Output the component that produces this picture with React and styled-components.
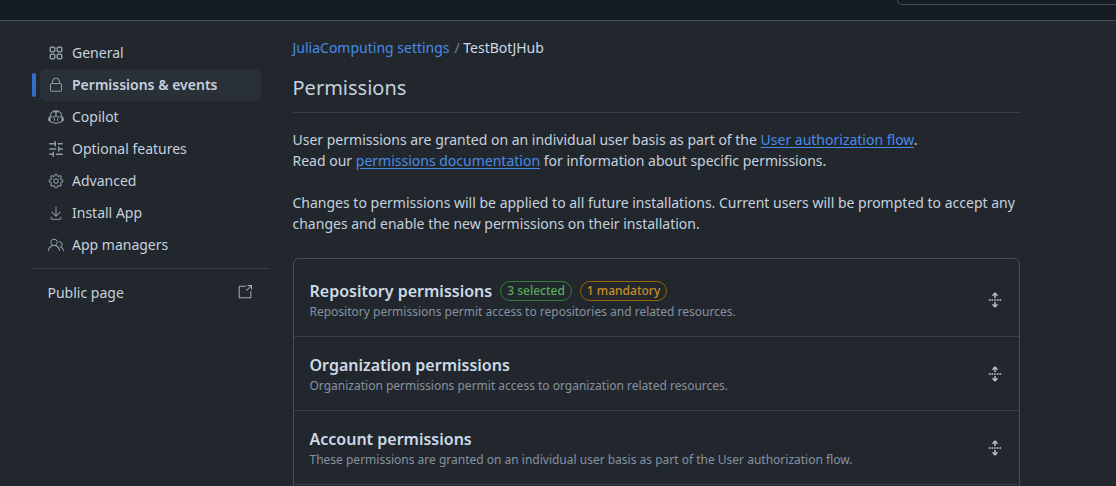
import React from 'react';
import styled, { createGlobalStyle } from 'styled-components';
import { GoLock, GoCopilot, GoGear, GoDownload, GoPeople, GoLinkExternal, GoUnfold } from 'react-icons/go';

const AppsIcon = ({ size }) => (
    <svg width={size} height={size} viewBox="0 0 16 16" fill="currentColor">
        <path d="M1.5 3.25c0-.966.784-1.75 1.75-1.75h2.5c.966 0 1.75.784 1.75 1.75v2.5A1.75 1.75 0 0 1 5.75 7.5h-2.5A1.75 1.75 0 0 1 1.5 5.75Zm7 0c0-.966.784-1.75 1.75-1.75h2.5c.966 0 1.75.784 1.75 1.75v2.5a1.75 1.75 0 0 1-1.75 1.75h-2.5A1.75 1.75 0 0 1 8.5 5.75Zm-7 7c0-.966.784-1.75 1.75-1.75h2.5c.966 0 1.75.784 1.75 1.75v2.5a1.75 1.75 0 0 1-1.75 1.75h-2.5a1.75 1.75 0 0 1-1.75-1.75Zm7 0c0-.966.784-1.75 1.75-1.75h2.5c.966 0 1.75.784 1.75 1.75v2.5a1.75 1.75 0 0 1-1.75 1.75h-2.5a1.75 1.75 0 0 1-1.75-1.75ZM3.25 3a.25.25 0 0 0-.25.25v2.5c0 .138.112.25.25.25h2.5A.25.25 0 0 0 6 5.75v-2.5A.25.25 0 0 0 5.75 3Zm7 0a.25.25 0 0 0-.25.25v2.5c0 .138.112.25.25.25h2.5a.25.25 0 0 0 .25-.25v-2.5a.25.25 0 0 0-.25-.25ZM3 10.25v2.5c0 .138.112.25.25.25h2.5a.25.25 0 0 0 .25-.25v-2.5a.25.25 0 0 0-.25-.25h-2.5a.25.25 0 0 0-.25.25Zm7.25-.25a.25.25 0 0 0-.25.25v2.5c0 .138.112.25.25.25h2.5a.25.25 0 0 0 .25-.25v-2.5a.25.25 0 0 0-.25-.25Z" />
    </svg>
);

const SlidersIcon = ({ size }) => (
    <svg width={size} height={size} viewBox="0 0 16 16" fill="currentColor">
        <path d="M15 2.75a.75.75 0 0 1-.75.75h-4a.75.75 0 0 1 0-1.5h4a.75.75 0 0 1 .75.75Zm-8.5.75v1.25a.75.75 0 0 0 1.5 0v-4a.75.75 0 0 0-1.5 0V2H1.75a.75.75 0 0 0 0 1.5H6.5Zm1.25 5.25a.75.75 0 0 0 0-1.5h-6a.75.75 0 0 0 0 1.5h6ZM15 8a.75.75 0 0 1-.75.75H11.5V10a.75.75 0 1 1-1.5 0V6a.75.75 0 0 1 1.5 0v1.25h2.75A.75.75 0 0 1 15 8Zm-9 5.25v-2a.75.75 0 0 0-1.5 0v1.25H1.75a.75.75 0 0 0 0 1.5H4.5v1.25a.75.75 0 0 0 1.5 0v-2Zm9 0a.75.75 0 0 1-.75.75h-6a.75.75 0 0 1 0-1.5h6a.75.75 0 0 1 .75.75Z" />
    </svg>
);

const navItems = [
    { label: 'General', icon: AppsIcon },
    { label: 'Permissions & events', icon: GoLock, active: true },
    { label: 'Copilot', icon: GoCopilot },
    { label: 'Optional features', icon: SlidersIcon },
    { label: 'Advanced', icon: GoGear },
    { label: 'Install App', icon: GoDownload },
    { label: 'App managers', icon: GoPeople },
];

const permissionRows = [
    {
        title: 'Repository permissions',
        text: 'Repository permissions permit access to repositories and related resources.',
        selected: '3 selected',
        mandatory: '1 mandatory',
    },
    {
        title: 'Organization permissions',
        text: 'Organization permissions permit access to organization related resources.',
    },
    {
        title: 'Account permissions',
        text: 'These permissions are granted on an individual user basis as part of the User authorization flow.',
    },
];

const App = () => {
    return (
        <Page>
            <GlobalStyle />
            <Header>
                <SearchBox />
            </Header>
            <Layout>
                <Sidebar>
                    <NavList>
                        {navItems.map(({ label, icon: Icon, active }) => (
                            <NavRow key={label}>
                                <Marker $active={active} />
                                <NavItem $active={active}>
                                    <Icon size={16} />
                                    <NavLabel>{label}</NavLabel>
                                </NavItem>
                            </NavRow>
                        ))}
                    </NavList>
                    <Divider />
                    <PublicLink>
                        Public page
                        <GoLinkExternal size={16} />
                    </PublicLink>
                </Sidebar>
                <Main>
                    <Breadcrumb>
                        <Link>JuliaComputing settings</Link>
                        <Slash>/</Slash>
                        <Current>TestBotJHub</Current>
                    </Breadcrumb>
                    <Heading>Permissions</Heading>
                    <Paragraph>
                        User permissions are granted on an individual user basis as part of the <Link $underline>User authorization flow</Link>.
                        <br />
                        Read our <Link $underline>permissions documentation</Link> for information about specific permissions.
                    </Paragraph>
                    <Paragraph>
                        Changes to permissions will be applied to all future installations. Current users will be prompted to accept any changes and enable the new permissions on their installation.
                    </Paragraph>
                    <Panel>
                        {permissionRows.map((row) => (
                            <PanelRow key={row.title}>
                                <RowBody>
                                    <RowTitle>
                                        {row.title}
                                        {row.selected && <Badge $color="#57ab5a" $border="#347d39">{row.selected}</Badge>}
                                        {row.mandatory && <Badge $color="#c69026" $border="#966600">{row.mandatory}</Badge>}
                                    </RowTitle>
                                    <RowText>{row.text}</RowText>
                                </RowBody>
                                <UnfoldButton>
                                    <GoUnfold size={16} />
                                </UnfoldButton>
                            </PanelRow>
                        ))}
                    </Panel>
                </Main>
            </Layout>
        </Page>
    );
};

const GlobalStyle = createGlobalStyle`
    html, body {
        margin: 0;
        height: 100%;
        overflow: hidden;
        background-color: #22272e;
    }

    * {
        box-sizing: border-box;
    }
`;

const Page = styled.div`
    width: 1116px;
    height: 486px;
    overflow: hidden;
    background-color: #22272e;
    color: #c5d1de;
    font-family: "Noto Sans", "Liberation Sans", sans-serif;
    font-size: 14px;
`;

const Header = styled.div`
    height: 21px;
    display: flex;
    justify-content: flex-end;
    align-items: flex-start;
    background-color: #161c23;
    border-bottom: 1px solid #444c56;
`;

const SearchBox = styled.div`
    width: 219px;
    height: 5px;
    border: 1px solid #444c56;
    border-top: none;
    border-right: none;
    border-bottom-left-radius: 6px;
`;

const Layout = styled.div`
    display: flex;
    padding: 16px 96px 0 32px;
    gap: 24px;
`;

const Sidebar = styled.div`
    width: 236.5px;
    flex-shrink: 0;
`;

const NavList = styled.div`
    display: flex;
    flex-direction: column;
`;

const NavRow = styled.div`
    display: flex;
    align-items: center;
    gap: 4px;
    height: 32px;
`;

const Marker = styled.span`
    width: 4px;
    height: 24px;
    border-radius: 6px;
    background-color: ${(props) => (props.$active ? '#316dca' : 'transparent')};
`;

const NavItem = styled.div`
    width: 221px;
    height: 32px;
    display: flex;
    align-items: center;
    gap: 8px;
    padding-left: 8px;
    border-radius: 6px;
    font-weight: ${(props) => (props.$active ? 600 : 400)};
    background-color: ${(props) => (props.$active ? '#2a3038' : 'transparent')};

    svg {
        color: #8d99a6;
        flex-shrink: 0;
    }
`;

const NavLabel = styled.span`
    padding-bottom: 2px;
`;

const Divider = styled.div`
    height: 1px;
    margin-top: 7px;
    background-color: #373e47;
`;

const PublicLink = styled.div`
    display: flex;
    align-items: center;
    justify-content: space-between;
    height: 32px;
    margin-top: 7px;
    padding: 0 16px 0 15.5px;

    svg {
        color: #a3afbc;
    }
`;

const Main = styled.div`
    width: 727px;
`;

const Breadcrumb = styled.div`
    display: flex;
    align-items: center;
    height: 21px;
`;

const Link = styled.a`
    color: #478be6;
    text-decoration: ${(props) => (props.$underline ? 'underline' : 'none')};
    text-underline-offset: 2px;
`;

const Slash = styled.span`
    margin: 0 3.5px 0 5px;
    color: #768390;
`;

const Current = styled.span`
    color: #cdd9e5;
`;

const Heading = styled.h2`
    margin: 15px 0 16px;
    padding-bottom: 9px;
    border-bottom: 1px solid #373e47;
    font-size: 20px;
    line-height: 30px;
    font-weight: 400;
    color: #c5d1de;
`;

const Paragraph = styled.p`
    margin: 0 0 21px;
    line-height: 21px;
`;

const Panel = styled.div`
    margin-top: 24px;
    min-height: 300px;
    border: 1px solid #444c56;
    border-radius: 6px;
`;

const PanelRow = styled.div`
    height: 74px;
    display: flex;
    align-items: center;
    justify-content: space-between;
    padding: 0 16px;
    border-bottom: 1px solid #373e47;

    &:first-child {
        height: 78px;
        padding-top: 4px;
    }
`;

const RowBody = styled.div`
    display: flex;
    flex-direction: column;
`;

const RowTitle = styled.div`
    display: flex;
    align-items: center;
    font-size: 16px;
    line-height: 24px;
    font-weight: 600;
    color: #cdd9e5;
`;

const Badge = styled.span`
    margin-left: 8px;
    padding: 0 6px;
    border: 1px solid ${(props) => props.$border};
    border-radius: 2em;
    font-size: 12px;
    line-height: 18px;
    font-weight: 500;
    color: ${(props) => props.$color};
`;

const RowText = styled.div`
    font-size: 12px;
    line-height: 18px;
    color: #8592a0;
`;

const UnfoldButton = styled.span`
    display: flex;
    color: #c5d1de;

    svg {
        stroke: currentColor;
        stroke-width: 0.6;
    }
`;

export default App;
